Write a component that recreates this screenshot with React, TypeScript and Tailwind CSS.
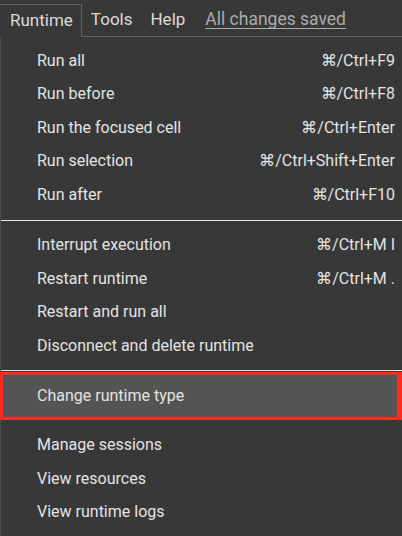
const groups: { label: string; shortcut?: string }[][] = [
  [
    { label: 'Run all', shortcut: '⌘/Ctrl+F9' },
    { label: 'Run before', shortcut: '⌘/Ctrl+F8' },
    { label: 'Run the focused cell', shortcut: '⌘/Ctrl+Enter' },
    { label: 'Run selection', shortcut: '⌘/Ctrl+Shift+Enter' },
    { label: 'Run after', shortcut: '⌘/Ctrl+F10' },
  ],
  [
    { label: 'Interrupt execution', shortcut: '⌘/Ctrl+M I' },
    { label: 'Restart runtime', shortcut: '⌘/Ctrl+M .' },
    { label: 'Restart and run all' },
    { label: 'Disconnect and delete runtime' },
  ],
];

const lastGroup = ['Manage sessions', 'View resources', 'View runtime logs'];

const MenuRow = ({ label, shortcut }: { label: string; shortcut?: string }) => (
  <div className="flex h-[33.5px] items-center justify-between pl-[36px] pr-[7px]">
    <span>{label}</span>
    {shortcut && <span>{shortcut}</span>}
  </div>
);

const App = () => {
  return (
    <div className="h-[536px] w-[402px] overflow-hidden bg-[#383838] font-['Roboto',sans-serif] text-[16px] text-[#e3e3e3]">
      <div className="flex h-[37px] items-end">
        <div className="flex h-[33px] items-center border-t border-r border-[#616161] pl-[10px] pr-[8px] text-[17px] text-[#dcdcdc]">
          Runtime
        </div>
        <div className="flex h-[37px] flex-1 items-center border-b border-[#616161] pt-[3px] text-[17px] text-[#dcdcdc]">
          <span className="ml-[9px]">Tools</span>
          <span className="ml-[18px]">Help</span>
          <span className="ml-[20px] text-[17.5px] text-[#ababab] underline underline-offset-[3px]">All changes saved</span>
        </div>
      </div>
      <div className="h-[499px] border-l border-[#4c4c4c] pt-[7px]">
        {groups.map((group, i) => (
          <div key={i}>
            {group.map((item) => (
              <MenuRow key={item.label} {...item} />
            ))}
            <div className={`${i === 0 ? 'my-[8px]' : 'mt-[7px] mb-[1px]'} h-px bg-[#e8e8e8]`} />
          </div>
        ))}
        <div className="-ml-px flex h-[48px] items-center border-[3px] border-r-[5px] border-[#ff2b1c] bg-[#545454] pl-[34px]">
          Change runtime type
        </div>
        <div className="pt-[9px]">
          {lastGroup.map((label) => (
            <MenuRow key={label} label={label} />
          ))}
        </div>
      </div>
    </div>
  );
};

export default App;
